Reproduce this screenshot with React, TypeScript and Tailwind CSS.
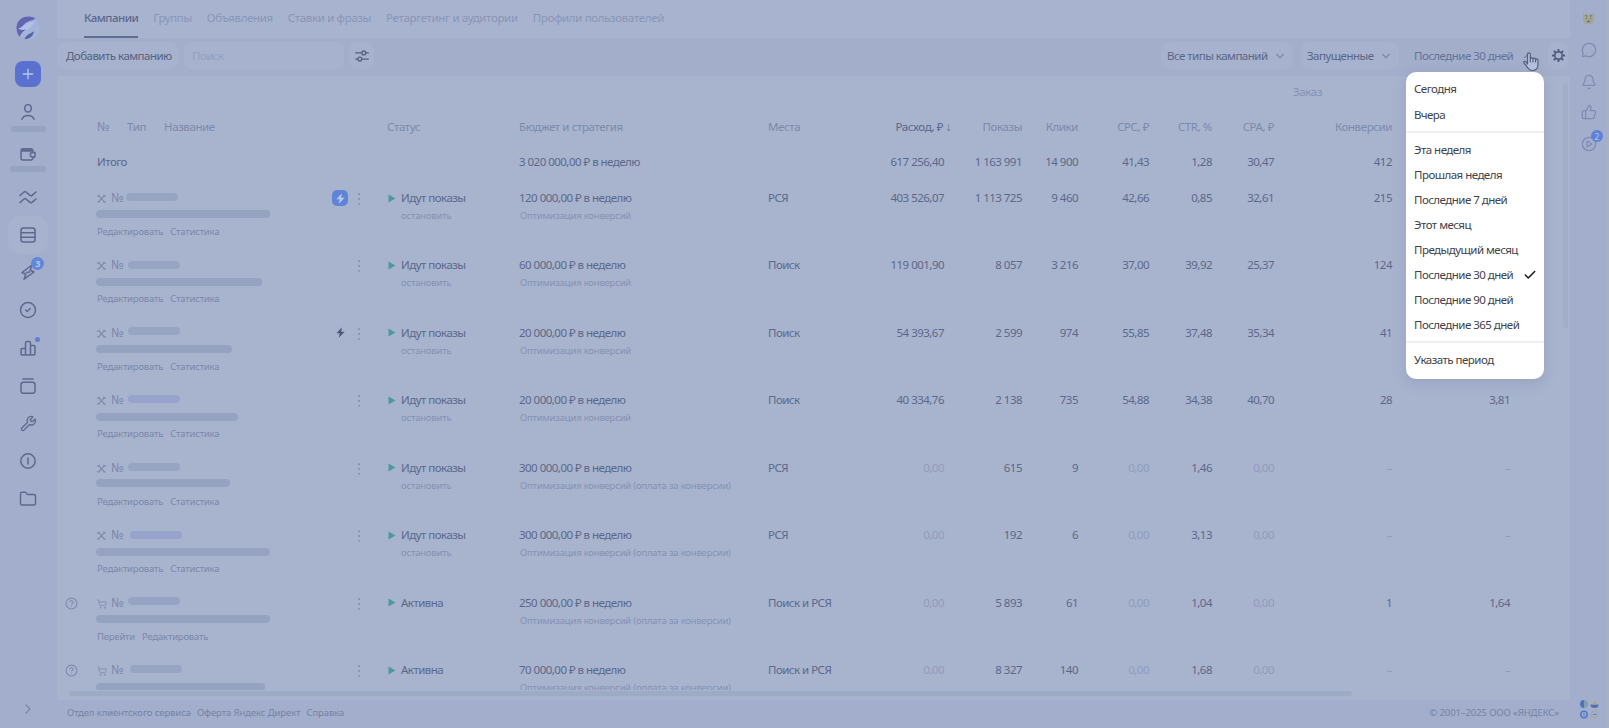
import type { ReactNode } from 'react'
import {
  Bell,
  Check,
  ChevronDown,
  ChevronRight,
  ChevronUp,
  CircleCheck,
  CirclePlay,
  CircleQuestionMark,
  Folder,
  MessageCircle,
  Plus,
  ShoppingCart,
  ThumbsUp,
  Wrench,
} from 'lucide-react'

const TABS = ['Кампании', 'Группы', 'Объявления', 'Ставки и фразы', 'Ретаргетинг и аудитории', 'Профили пользователей']

const PERIODS = [
  ['Сегодня', 'Вчера'],
  ['Эта неделя', 'Прошлая неделя', 'Последние 7 дней', 'Этот месяц', 'Предыдущий месяц', 'Последние 30 дней', 'Последние 90 дней', 'Последние 365 дней'],
  ['Указать период'],
]

const SELECTED_PERIOD = 'Последние 30 дней'

interface Campaign {
  kind: 'expert' | 'shop'
  boost?: 'active' | 'idle'
  id: string
  title: string
  links: string[]
  status: string
  budget: string
  strategy: string
  places: string
  // spend, shows, clicks, cpc, ctr, cpa, conversions, conversion rate
  stats: string[]
}

const PAID = 'Оптимизация конверсий (оплата за конверсии)'
const EDIT_LINKS = ['Редактировать', 'Статистика']

const CAMPAIGNS: Campaign[] = [
  {
    kind: 'expert', boost: 'active', id: 'ml-[2px] mt-[5px] bg-[#98a5c2]', title: 'mt-px w-[174px]', links: EDIT_LINKS, status: 'Идут показы',
    budget: '120 000,00 ₽ в неделю', strategy: 'Оптимизация конверсий', places: 'РСЯ',
    stats: ['403 526,07', '1 113 725', '9 460', '42,66', '0,85', '32,61', '215', ''],
  },
  {
    kind: 'expert', id: 'ml-[4px] mt-[6px] bg-[#98a5c2]', title: 'mt-[2px] w-[166px]', links: EDIT_LINKS, status: 'Идут показы',
    budget: '60 000,00 ₽ в неделю', strategy: 'Оптимизация конверсий', places: 'Поиск',
    stats: ['119 001,90', '8 057', '3 216', '37,00', '39,92', '25,37', '124', ''],
  },
  {
    kind: 'expert', boost: 'idle', id: 'ml-[4px] mt-[4px] bg-[#98a5c2]', title: 'mt-px w-[136px]', links: EDIT_LINKS, status: 'Идут показы',
    budget: '20 000,00 ₽ в неделю', strategy: 'Оптимизация конверсий', places: 'Поиск',
    stats: ['54 393,67', '2 599', '974', '55,85', '37,48', '35,34', '41', ''],
  },
  {
    kind: 'expert', id: 'ml-[4px] mt-[5px] bg-[#97a3ca]', title: 'mt-[2px] w-[142px]', links: EDIT_LINKS, status: 'Идут показы',
    budget: '20 000,00 ₽ в неделю', strategy: 'Оптимизация конверсий', places: 'Поиск',
    stats: ['40 334,76', '2 138', '735', '54,88', '34,38', '40,70', '28', '3,81'],
  },
  {
    kind: 'expert', id: 'ml-[4px] mt-[5px] bg-[#98a5c2]', title: 'mt-0 w-[134px]', links: EDIT_LINKS, status: 'Идут показы',
    budget: '300 000,00 ₽ в неделю', strategy: PAID, places: 'РСЯ',
    stats: ['0,00', '615', '9', '0,00', '1,46', '0,00', '–', '–'],
  },
  {
    kind: 'expert', id: 'ml-[6px] mt-[6px] bg-[#97a3ca]', title: 'mt-[2px] w-[174px]', links: EDIT_LINKS, status: 'Идут показы',
    budget: '300 000,00 ₽ в неделю', strategy: PAID, places: 'РСЯ',
    stats: ['0,00', '192', '6', '0,00', '3,13', '0,00', '–', '–'],
  },
  {
    kind: 'shop', id: 'ml-[4px] mt-[4px] bg-[#97a3c5]', title: 'mt-px w-[174px]', links: ['Перейти', 'Редактировать'], status: 'Активна',
    budget: '250 000,00 ₽ в неделю', strategy: PAID, places: 'Поиск и РСЯ',
    stats: ['0,00', '5 893', '61', '0,00', '1,04', '0,00', '1', '1,64'],
  },
  {
    kind: 'shop', id: 'ml-[6px] mt-[5px] bg-[#98a5c2]', title: 'mt-[2px] w-[169px]', links: [], status: 'Активна',
    budget: '70 000,00 ₽ в неделю', strategy: PAID, places: 'Поиск и РСЯ',
    stats: ['0,00', '8 327', '140', '0,00', '1,68', '0,00', '–', '–'],
  },
]

const GRID = 'grid grid-cols-[40px_234px_56px_132px_249px_75px_101px_78px_56px_71px_63px_62px_118px_118px]'
const SMALL = 'text-[9.500px] leading-4 tracking-[-0.200px]'

function Stroke({ children, className = 'size-4', width = 1.5 }: { children: ReactNode; className?: string; width?: number }) {
  return (
    <svg viewBox="0 0 16 16" fill="none" stroke="currentColor" strokeWidth={width} strokeLinecap="round" strokeLinejoin="round" className={className}>
      {children}
    </svg>
  )
}

function NavItem({ children, active }: { children: ReactNode; active?: boolean }) {
  return (
    <div className={`relative grid h-[37.8px] w-10 place-items-center rounded-xl ${active ? 'bg-[#a6b2ce]' : ''}`}>
      {children}
    </div>
  )
}

function Sidebar() {
  return (
    <aside className="flex h-full w-[57px] shrink-0 flex-col items-center bg-[#a2aecb] pt-4 pr-px pb-[11px] text-[#5c698c]">
      <svg viewBox="0 0 24 24" className="size-6">
        <circle cx="12" cy="12" r="11.500" fill="#a3b3dc" />
        <path d="M.5 13C0 5 6 .5 12.500.5c3 0 5 .8 7 2.300C16 4.500 11 5.500 8.500 8S5 12.500.5 13z" fill="#6266b2" />
        <path d="M.6 13.500C6 12.500 7.500 9 11 7.500c3-1.300 5.500-1.300 8-2.500-2 4.500-6 8.500-12 11.500-2.500 1.300-4 1-5.500.5z" fill="#b1c0e4" />
        <path d="M.7 11.500c-.3 4.500 1.300 7.500 3 9.500C4.500 18 6.500 16 10 13.500c-3.500.8-7 .5-9.300-2z" fill="#6266b2" />
        <path d="M8.500 23.200c5.500-.2 8.500-3 9.500-8L14 17.500c-2.500 1.200-4.500 3-5.500 5.700z" fill="#5a619f" />
      </svg>
      <button className="mt-[21px] grid size-[26px] shrink-0 place-items-center rounded-lg bg-[#5a71cf] text-[#b9c8ec]">
        <Plus className="size-4" strokeWidth={2} />
      </button>
      <Stroke className="mt-[17px] size-4 shrink-0">
        <ellipse cx="8" cy="4.300" rx="3.300" ry="3.800" />
        <path d="M2 15.200c1-2.500 3.200-3.700 6-3.700s5 1.200 6 3.700" />
      </Stroke>
      <div className="mt-[6px] h-[6px] w-[35px] shrink-0 rounded-sm bg-[#95a2c0]" />
      <Stroke className="mt-[14px] size-4 shrink-0">
        <path d="M12.800 6V4.800a2 2 0 0 0-2-2H3a2 2 0 0 0-2 2V12a2 2 0 0 0 2 2h7.800a2 2 0 0 0 2-2v-.5" />
        <path d="M2 3.500h10.500v2H2z" fill="currentColor" strokeWidth="0.500" />
        <path d="M15 6.500h-2.500a2.200 2.200 0 0 0 0 4.500H15z" />
      </Stroke>
      <div className="mt-[4px] h-[6px] w-[36px] shrink-0 rounded-sm bg-[#95a2c0]" />

      <nav className="mt-[6px] flex flex-col">
        <NavItem>
          <svg viewBox="0 0 18 16" fill="none" stroke="currentColor" strokeWidth="1.600" strokeLinecap="round" strokeLinejoin="round" className="h-4 w-[18px]">
            <path d="M1 6.500 5 3Q6 2.200 7 3l4 3.300q1 .8 2 0L17 3M1 13.500 5 10q1-.8 2 0l4 3.300q1 .8 2 0L17 10" />
          </svg>
        </NavItem>
        <NavItem active>
          <Stroke>
            <rect x="1" y="1" width="14" height="14" rx="2.500" />
            <path d="M1 5.700h14M1 10.300h14" />
          </Stroke>
        </NavItem>
        <NavItem>
          <Stroke>
            <path d="M12 1 2 8.500l3.800 1.700L4 15.200 14 8 10.200 6.200zM6.500 8.500l3-.5" />
          </Stroke>
          <span className="absolute top-[3px] left-[23px] grid size-[13px] place-items-center rounded-full bg-[#6286d8] text-[9px] leading-none font-bold text-[#b6c6ec]">3</span>
        </NavItem>
        <NavItem>
          <CircleCheck className="size-[18px]" strokeWidth={2} />
        </NavItem>
        <NavItem>
          <Stroke>
            <path d="M1 9.700q0-1.200 1.200-1.200h3.300V15H2.200Q1 15 1 13.800zM5.500 15V3q0-1.500 1.500-1.500h2q1.500 0 1.500 1.500v12zM10.500 5.500h3Q15 5.500 15 7v6.500q0 1.500-1.500 1.500h-3z" />
          </Stroke>
          <span className="absolute top-[8px] left-[27px] size-[5px] rounded-full bg-[#5f7fd0]" />
        </NavItem>
        <NavItem>
          <Stroke>
            <rect x="1" y="4.300" width="14" height="11" rx="2.500" />
            <path d="M3 1h10" />
          </Stroke>
        </NavItem>
        <NavItem>
          <Wrench className="size-[17px]" strokeWidth={1.900} />
        </NavItem>
        <NavItem>
          <Stroke>
            <circle cx="8" cy="8" r="7.200" />
            <path d="M8 5v6" />
          </Stroke>
        </NavItem>
        <NavItem>
          <Folder className="size-[18px]" strokeWidth={1.900} />
        </NavItem>
      </nav>
      <ChevronRight className="mt-auto size-4 text-[#7c88aa]" strokeWidth={2} />
    </aside>
  )
}

function Select({ label, className }: { label: string; className: string }) {
  return (
    <button className={`flex h-[27px] items-center justify-between rounded-lg bg-[#a6b2ce] pr-[6px] pl-[6px] text-[#596688] ${className}`}>
      {label}
      <ChevronDown className="size-[14px] shrink-0 text-[#7c89ab]" strokeWidth={2} />
    </button>
  )
}

function PeriodMenu() {
  return (
    <div className="absolute top-[30px] left-0 z-10 h-[307px] w-[138px] rounded-[10px] bg-white pt-[4.500px] text-[#3f424b] shadow-[0_4px_14px_rgba(70,90,140,0.18)]">
      {PERIODS.map((group, i) => (
        <div key={i}>
          {i > 0 && <div className="my-[4px] h-[2px] bg-[#eff0f2]" />}
          {group.map((name) => (
            <div key={name} className="flex h-[25.100px] items-center justify-between pr-[7px] pl-2">
              {name}
              {name === SELECTED_PERIOD && <Check className="size-[14px] text-[#17181c]" strokeWidth={2.600} />}
            </div>
          ))}
        </div>
      ))}
    </div>
  )
}

function Toolbar() {
  return (
    <div className="flex h-[38px] items-start bg-[#a2aeca] pt-[4px]">
      <button className="h-[27px] w-[121px] rounded-lg bg-[#a6b2ce] pl-[9px] text-left text-[#55627f]">Добавить кампанию</button>
      <div className="ml-[6px] flex h-[27px] w-[160px] items-center rounded-lg bg-[#a6b2ce] pl-2 text-[#93a0c0]">Поиск</div>
      <button className="ml-[5px] grid h-[27px] w-[25px] place-items-center rounded-lg bg-[#a6b2ce] text-[#55627f]">
        <Stroke className="size-[14px]">
          <path d="M.8 4.500h7M12.500 4.500h2.700M.8 11.500h2.500M8 11.500h7.200" />
          <circle cx="10" cy="4.500" r="2.200" />
          <circle cx="5.500" cy="11.500" r="2.200" />
        </Stroke>
      </button>
      <Select label="Все типы кампаний" className="ml-auto w-[132px]" />
      <Select label="Запущенные" className="ml-[8px] w-[98px]" />
      <div className="relative ml-[7px] flex h-[27px] w-[138px] items-center pl-2 text-[#65729a]">
        Последние 30 дней
        <ChevronUp className="ml-[8px] size-[14px] text-[#7c89ab]" strokeWidth={2} />
        <PeriodMenu />
        <svg viewBox="0 0 18 20" className="absolute top-[9px] left-[116px] z-20 h-[21px] w-[18px]" fill="#b4c0da" stroke="#535e80" strokeWidth="1.200" strokeLinejoin="round" strokeLinecap="round">
          <path d="M5.500 12.500V2.700a1.400 1.400 0 0 1 2.800 0v4.600q.2-1 1.300-1t1.400 1.200q.3-.9 1.300-.8t1.300 1.300q.3-.7 1.200-.6 1.200.2 1.200 1.600v3.500c0 3.500-1.500 6.500-5.500 6.500-3 0-4.200-1.500-5.500-3.800L2 11.500q-.7-1.400.5-1.700 1.200-.2 2 1.200zM8.300 7v3.500M11 7.500v3M13.600 8v2.500" />
        </svg>
      </div>
      <button className="mr-[2px] ml-[4px] grid h-[27px] w-[20px] place-items-center rounded-lg bg-[#a6b2ce] text-[#4c5979]">
        <Stroke className="size-[13px]" width={1.700}>
          <circle cx="8" cy="8" r="4.600" />
          <path d="M8 1v2M8 13v2M1 8h2M13 8h2M3 3l1.500 1.500M11.500 11.500 13 13M3 13l1.500-1.500M11.500 4.500 13 3" strokeWidth="2.400" />
        </Stroke>
      </button>
    </div>
  )
}

function KindIcon({ kind }: { kind: Campaign['kind'] }) {
  if (kind === 'shop') return <ShoppingCart className="mt-[6px] size-[10px] shrink-0 text-[#7f8bac]" strokeWidth={2} />
  return (
    <Stroke className="mt-[6px] mr-px size-[9px] shrink-0" width={2}>
      <path d="M3 3l10 11M13 3 3 14M1 14h3M12 14h3M1 4l3-2M12 2l3 2" />
    </Stroke>
  )
}

function CampaignRow({ row }: { row: Campaign }) {
  return (
    <div className={`${GRID} h-[67.450px] shrink-0`}>
      <div className="pt-[4px] pl-[8px] text-[#7e8aab]">
        {row.kind === 'shop' && <CircleQuestionMark className="size-[13px]" strokeWidth={2} />}
      </div>
      <div>
        <div className="flex h-[21px] text-[#7c88a8]">
          <KindIcon kind={row.kind} />
          <span className="ml-[4px] w-[13px] text-[12.500px] leading-[20px]">№</span>
          <span className={`h-2 w-[52px] rounded ${row.id}`} />
        </div>
        <div className="-ml-px flex h-[15px]">
          <div className={`h-2 rounded bg-[#96a3c0] ${row.title}`} />
        </div>
        <div className={`flex gap-[7px] text-[#7b87a9] ${SMALL}`}>
          {row.links.map((link) => (
            <span key={link}>{link}</span>
          ))}
        </div>
      </div>
      <div className="flex">
        <div className={`mt-[2px] ml-[1px] grid size-4 place-items-center rounded-[5px] ${row.boost === 'active' ? 'bg-[#6085d7] text-[#b7c8ec]' : 'text-[#4c587a]'}`}>
          {row.boost && (
            <svg viewBox="0 0 16 16" fill="currentColor" className="size-[11px]">
              <path d="M10 .5 2 9h4.800L5.500 15.500 14 7H9z" />
            </svg>
          )}
        </div>
        <svg viewBox="0 0 4 12" fill="#7c88a9" className="mt-[5px] ml-[9px] h-3 w-1">
          <circle cx="2" cy="1.200" r="0.900" />
          <circle cx="2" cy="6" r="0.900" />
          <circle cx="2" cy="10.800" r="0.900" />
        </svg>
      </div>
      <div>
        <div className="flex items-center leading-[20px] text-[#5b688a]">
          <svg viewBox="0 0 8 9" className="mr-[5px] ml-[1px] h-[9px] w-2" fill="#4d999f">
            <path d="M.5.5 7.500 4.500.5 8.500z" />
          </svg>
          {row.status}
        </div>
        {row.kind === 'expert' && <div className={`pl-[14px] text-[#8591b2] ${SMALL}`}>остановить</div>}
      </div>
      <div>
        <div className="leading-[20px] text-[#5b688a]">{row.budget}</div>
        <div className={`pl-px text-[#8591b2] ${SMALL}`}>{row.strategy}</div>
      </div>
      <div className="leading-[20px] text-[#5b688a]">{row.places}</div>
      {row.stats.map((value, i) => (
        <div key={i} className={`text-right leading-[20px] ${value === '0,00' || value === '–' ? 'text-[#8f9bbc]' : 'text-[#5b688a]'}`}>
          {value}
        </div>
      ))}
    </div>
  )
}

function CampaignTable() {
  return (
    <div className="relative flex h-[624px] flex-col bg-[#a8b4ce]">
      <div className="pt-[6px] pl-[1236px] leading-[20px] tracking-[-0.350px] text-[#8491b2]">Заказ</div>
      <div className={`${GRID} mt-[15px] leading-[20px] tracking-[-0.400px] text-[#7d89aa]`}>
        <span />
        <span className="flex">
          <span className="w-[30px] text-[12.500px]">№</span>
          <span className="w-[37px]">Тип</span>
          <span>Название</span>
        </span>
        <span />
        <span>Статус</span>
        <span>Бюджет и стратегия</span>
        <span>Места</span>
        <span className="-mr-[7px] text-right text-[#596688]">Расход, ₽ ↓</span>
        {['Показы', 'Клики', 'CPC, ₽', 'CTR, %', 'CPA, ₽', 'Конверсии'].map((name) => (
          <span key={name} className="text-right">{name}</span>
        ))}
      </div>
      <div className={`${GRID} mt-[15px] mb-[16px] leading-[20px] text-[#5b688a]`}>
        <span />
        <span>Итого</span>
        <span />
        <span />
        <span>3 020 000,00 ₽ в неделю</span>
        <span />
        {['617 256,40', '1 163 991', '14 900', '41,43', '1,28', '30,47', '412'].map((value) => (
          <span key={value} className="text-right">{value}</span>
        ))}
      </div>
      <div className="flex h-[502px] flex-col overflow-hidden">
        {CAMPAIGNS.map((row, i) => (
          <CampaignRow key={i} row={row} />
        ))}
      </div>
      <div className="mt-px ml-[12px] h-[5px] w-[1283px] rounded-sm bg-[#9eabc7]" />
      <div className="absolute top-[8px] right-[2px] h-[244px] w-[5px] rounded-sm bg-[#a1aeca]" />
    </div>
  )
}

function RightRail() {
  return (
    <aside className="flex h-full w-[39px] shrink-0 flex-col items-center border-r-2 border-[#a9b0c0] bg-[#a2aecb] text-[#7f8bb0]">
      <svg viewBox="0 0 14 14" className="mt-[12px] size-[13px]">
        <path d="M1 1l3.500 2h5L13 1v8c0 3-3 4.500-6 4.500S1 12 1 9z" fill="#a3a794" />
        <path d="M4 7h1.500M8.500 7H10M5 10.500h4M7 9v1.500M4 3l1 2M10 3 9 5" stroke="#686f75" strokeWidth="1.200" />
      </svg>
      <MessageCircle className="mt-[17px] size-4" strokeWidth={1.900} />
      <Bell className="mt-[16px] size-4" strokeWidth={1.900} />
      <ThumbsUp className="mt-[14px] size-4" strokeWidth={1.900} />
      <div className="relative mt-[16px]">
        <CirclePlay className="size-4" strokeWidth={1.900} />
        <span className="absolute -top-[6px] left-[10px] grid size-3 place-items-center rounded-full bg-[#5c83d9] text-[9px] leading-none text-[#b6c6ec]">2</span>
      </div>
      <svg viewBox="0 0 20 20" className="mt-auto mb-[9px] size-5">
        <path d="M5 1a4 4 0 1 0 0 8z" fill="#4d73b8" />
        <path d="M5 1a4 4 0 0 1 0 8z" fill="#7d9fae" />
        <path d="M11.500 5.500h8a4 3.500 0 0 1-8 0z" fill="#4f70b9" />
        <path d="M15.500 1l2.500 4.500h-5z" fill="#b3a585" />
        <circle cx="5" cy="15.500" r="3.200" fill="none" stroke="#4f78cd" strokeWidth="1.500" />
        <path d="M5 14v3" stroke="#4f78cd" />
        <circle cx="15.500" cy="15.500" r="3.300" fill="none" stroke="#a5a99d" strokeWidth="1.200" />
        <path d="M14 15.500h3.500" stroke="#6e7da0" />
      </svg>
    </aside>
  )
}

export default function App() {
  return (
    <div className="flex h-[728px] w-[1609px] overflow-hidden bg-[#a2aecb] font-['Noto_Sans',sans-serif] text-[11.500px] tracking-[-0.520px] whitespace-nowrap">
      <Sidebar />
      <main className="flex w-[1513px] shrink-0 flex-col">
        <nav className="flex h-[38px] gap-[15px] bg-[#a8b4cf] pl-[27px] tracking-[-0.350px] text-[#8894b7]">
          {TABS.map((tab, i) => (
            <a
              key={tab}
              className={`h-full pt-[8px] leading-[20px] ${i === 0 ? 'border-b-2 border-[#5f6c92] font-medium tracking-[-0.520px] text-[#5b688c]' : ''}`}
            >
              {tab}
            </a>
          ))}
        </nav>
        <Toolbar />
        <CampaignTable />
        <footer className="flex flex-1 items-start gap-[6px] pt-[5px] pr-[11px] pl-[10px] text-[9.500px] leading-4 tracking-[-0.100px] text-[#7682a6]">
          <span>Отдел клиентского сервиса</span>
          <span>Оферта Яндекс Директ</span>
          <span>Справка</span>
          <span className="ml-auto">© 2001–2025 ООО «ЯНДЕКС»</span>
        </footer>
      </main>
      <RightRail />
    </div>
  )
}
